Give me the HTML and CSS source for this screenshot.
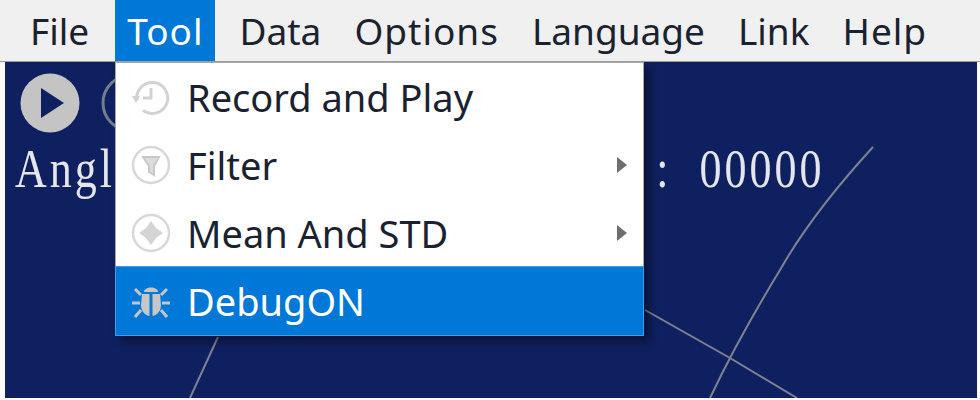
FILE: index.html
```html
<!DOCTYPE html>
<html lang="en">
<head>
  <meta charset="UTF-8">
  <title>Tool menu</title>
  <link rel="stylesheet" href="styles.css">
</head>
<body>
<div class="menubar">
  <div class="menubar-item first">File</div>
  <div class="menubar-item wide active">Tool</div>
  <div class="menubar-item">Data</div>
  <div class="menubar-item wide">Options</div>
  <div class="menubar-item">Language</div>
  <div class="menubar-item">Link</div>
  <div class="menubar-item wide">Help</div>
</div>

<div class="plot">
  <svg class="plot-lines" width="972" height="337" viewBox="0 0 972 337">
    <path d="M868 86 C835 122 800 165 775 209 C750 250 725 295 705 337" />
    <path d="M640 249 L725 297 L792 337" />
    <path d="M213 276 L185 337" />
  </svg>

  <div class="controls">
    <svg class="round-btn" width="60" height="60" viewBox="0 0 60 60">
      <circle cx="30" cy="30" r="29.500" fill="#c4c4c4" />
      <path d="M21 15 L44 30 L21 45 Z" fill="#0f2060" />
    </svg>
    <svg class="round-btn" width="60" height="60" viewBox="0 0 60 60">
      <circle cx="30" cy="30" r="28" fill="none" stroke="#777c8c" stroke-width="3" />
    </svg>
  </div>

  <div class="readout">
    <span>Angl</span>
    <span class="readout-right">Value<span class="readout-sep">:</span>  00000</span>
  </div>

  <div class="dropdown">
    <div class="dropdown-item">
      <svg class="item-icon" width="40" height="40" viewBox="0 0 40 40" fill="none" stroke="#d2d2d2" stroke-width="3">
        <path d="M6 24 A15.500 15.500 0 1 1 12 33.500 M20 11 V21 H12" />
        <path d="M1 19 L9 19 L5 26 Z" fill="#d2d2d2" stroke="none" />
      </svg>
      <span class="item-label">Record and Play</span>
    </div>
    <div class="dropdown-item">
      <svg class="item-icon" width="40" height="40" viewBox="0 0 40 40" fill="none" stroke="#d8d8d8" stroke-width="2.500">
        <circle cx="20" cy="20" r="18" />
        <path d="M12 12 H28 L23 21 V30 L18 27 V21 Z" fill="#dcdcdc" stroke="#c8c8c8" stroke-width="2" />
      </svg>
      <span class="item-label">Filter</span>
      <span class="item-arrow"></span>
    </div>
    <div class="dropdown-item">
      <svg class="item-icon" width="40" height="40" viewBox="0 0 40 40" fill="none" stroke="#d8d8d8" stroke-width="2.500">
        <circle cx="20" cy="20" r="18" />
        <path d="M20 8 L25 15 L32 20 L25 25 L20 32 L15 25 L8 20 L15 15 Z" fill="#d4d4d4" stroke="none" />
      </svg>
      <span class="item-label">Mean And STD</span>
      <span class="item-arrow"></span>
    </div>
    <div class="dropdown-item selected">
      <svg class="item-icon" width="40" height="40" viewBox="0 0 40 40" fill="#c6c6c6">
        <path d="M13 11 C13 5 27 5 27 11 Z" />
        <path d="M11 13 H18.500 V35 C13 34 10 29 10 24 Z M21.500 13 H29 L30 24 C30 29 27 34 21.500 35 Z" />
        <path d="M10 14 L4 8 M30 14 L36 8 M9 22 H1 M31 22 H39 M10 29 L4 36 M30 29 L36 36" stroke="#c6c6c6" stroke-width="3" fill="none" />
      </svg>
      <span class="item-label">DebugON</span>
    </div>
  </div>
</div>
</body>
</html>
```

FILE: styles.css
```css
html, body {
  margin: 0;
  height: 100%;
  background-color: #fbfbfb;
  overflow: hidden;
}
body {
  font-family: "Noto Sans", "Open Sans", sans-serif;
  color: #1a2230;
  padding: 0 3px 2px 5px;
  box-sizing: border-box;
  display: flex;
  flex-direction: column;
}
.menubar {
  display: flex;
  height: 61px;
  margin: 0 -3px 0 -5px;
  padding-left: 18px;
  background-color: #f0f0f0;
  border-bottom: 1px solid #9a9a9a;
  font-size: 37px;
  flex-shrink: 0;
}
.menubar-item {
  padding: 0 12px;
  margin-right: 9px;
  line-height: 62px;
  white-space: nowrap;
}
.menubar-item.first {
  margin-right: 14px;
}
.menubar-item.wide {
  letter-spacing: 1px;
}
.menubar-item.active {
  margin-right: 12px;
  background-color: #0078d7;
  color: #fff;
}
.plot {
  position: relative;
  flex: 1;
  background-color: #0f2060;
  padding: 11px 0 0 10px;
  overflow: hidden;
}
.plot-lines {
  position: absolute;
  left: 0;
  top: -1px;
}
.plot-lines path {
  fill: none;
  stroke: #7d8290;
  stroke-width: 2;
}
.controls {
  display: flex;
  gap: 21px;
  margin-left: 5px;
}
.readout {
  display: flex;
  font-family: "Liberation Serif", serif;
  font-size: 44px;
  letter-spacing: 3px;
  line-height: 40px;
  color: #e4e6ec;
  white-space: pre;
  transform: scaleY(1.25);
  transform-origin: top left;
  margin-top: 11px;
}
.readout-right {
  margin-left: 418px;
}
.readout-sep {
  margin-left: 8px;
}
.round-btn {
  display: block;
  flex-shrink: 0;
}
.dropdown {
  position: absolute;
  left: 110px;
  top: 0;
  width: 527px;
  background-color: #fff;
  border: 1px solid #a8a8a8;
  box-shadow: 6px 6px 8px rgba(0, 0, 0, 0.4);
}
.dropdown-item {
  display: flex;
  align-items: center;
  height: 68px;
  padding-left: 15px;
  font-size: 38px;
}
.item-icon {
  flex-shrink: 0;
  margin-right: 16px;
}
.item-label {
  flex: 1;
}
.item-arrow {
  width: 0;
  height: 0;
  margin-right: 16px;
  border-left: 10px solid #6e6e6e;
  border-top: 8px solid transparent;
  border-bottom: 8px solid transparent;
}
.dropdown-item.selected {
  background-color: #0078d7;
  color: #fff;
  outline: 1px solid #3c9cee;
}
```
